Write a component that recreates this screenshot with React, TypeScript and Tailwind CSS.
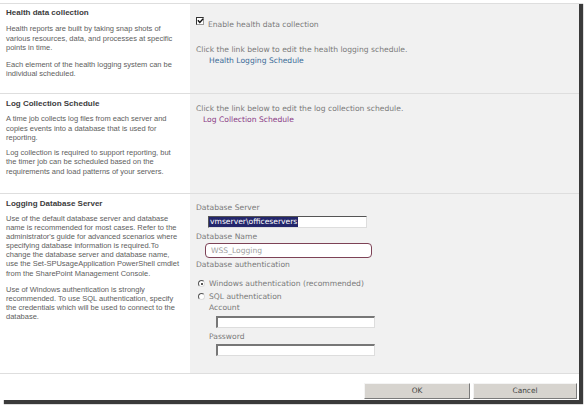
const LEFT_FONT = "font-['Liberation_Sans',Arial,sans-serif]";
const RIGHT_FONT = "font-['DejaVu_Sans',Verdana,sans-serif]";

function SectionHeading({ children }: { children: React.ReactNode }) {
  return <div className="text-[8px] font-bold leading-[10px] text-[#3c3c3c]">{children}</div>;
}

function Paragraph({ lines, tight }: { lines: string[]; tight?: boolean }) {
  return (
    <p className={`whitespace-nowrap text-[7.5px] text-[#606060] ${tight ? 'leading-[9.1px]' : 'leading-[9.6px]'}`}>
      {lines.map((line, i) => (
        <span key={i} className="block">
          {line}
        </span>
      ))}
    </p>
  );
}

function ClassicInput() {
  return (
    <div className="h-[12px] w-[159px] border-l-2 border-t-2 border-l-[#777] border-t-[#777] border-b border-r border-b-[#ddd] border-r-[#ddd] bg-white" />
  );
}

function Radio({ checked }: { checked?: boolean }) {
  return (
    <span className="relative inline-block h-[7px] w-[7px] shrink-0 rounded-full border border-l-[#555] border-t-[#555] border-r-[#ddd] border-b-[#ddd] bg-white">
      {checked && <span className="absolute left-[1.5px] top-[1.5px] h-[2.5px] w-[2.5px] rounded-full bg-[#222]" />}
    </span>
  );
}

export default function App() {
  return (
    <div className="h-[405px] w-[584px] overflow-hidden bg-white">
      <div className="flex h-[400px] w-[579px] flex-col bg-white pt-[3px] shadow-[4px_4px_1px_#3a3a3a]">
        {/* health */}
        <div className="flex h-[90px] border-t border-[#dedede]">
          <div className={`w-[190px] bg-white px-[6px] pt-[4px] ${LEFT_FONT}`}>
            <SectionHeading>Health data collection</SectionHeading>
            <div className="mt-[6px] space-y-[7px]">
              <Paragraph
                lines={[
                  'Health reports are built by taking snap shots of',
                  'various resources, data, and processes at specific',
                  'points in time.',
                ]}
              />
              <Paragraph
                lines={['Each element of the health logging system can be', 'individual scheduled.']}
              />
            </div>
          </div>
          <div className={`flex-1 bg-[#f1f1f1] pl-[6px] pt-[13px] text-[7.6px] text-[#7a7a7a] ${RIGHT_FONT}`}>
            <div className="flex items-start">
              <span className="relative inline-block h-[8px] w-[8px] border border-l-[#333] border-t-[#333] border-r-[#999] border-b-[#999] bg-white">
                <svg viewBox="0 0 8 8" className="absolute left-0 top-0 h-[7px] w-[7px]">
                  <path d="M1 2.5 L3.2 5 L7 0.8" fill="none" stroke="#111" strokeWidth="1.6" />
                </svg>
              </span>
              <span className="ml-[4px] mt-[3px] leading-[10px]">Enable health data collection</span>
            </div>
            <div className="mt-[15px] whitespace-nowrap leading-[10px]">
              Click the link below to edit the health logging schedule.
            </div>
            <div className="mt-[1px] pl-[13px] leading-[10px] text-[#3b6c98]">Health Logging Schedule</div>
          </div>
        </div>

        {/* log collection */}
        <div className="flex h-[100px] border-t border-[#dedede]">
          <div className={`w-[190px] bg-white px-[6px] pt-[5px] ${LEFT_FONT}`}>
            <SectionHeading>Log Collection Schedule</SectionHeading>
            <div className="mt-[5px] space-y-[5px]">
              <Paragraph
                lines={[
                  'A time job collects log files from each server and',
                  'copies events into a database that is used for',
                  'reporting.',
                ]}
              />
              <Paragraph
                lines={[
                  'Log collection is required to support reporting, but',
                  'the timer job can be scheduled based on the',
                  'requirements and load patterns of your servers.',
                ]}
              />
            </div>
          </div>
          <div className={`flex-1 bg-[#f1f1f1] pl-[6px] pt-[9px] text-[7.6px] text-[#7a7a7a] ${RIGHT_FONT}`}>
            <div className="whitespace-nowrap leading-[11px]">
              Click the link below to edit the log collection schedule.
            </div>
            <div className="pl-[7px] leading-[11px] text-[#8b3b86]">Log Collection Schedule</div>
          </div>
        </div>

        {/* database */}
        <div className="flex h-[181px] border-y border-[#dedede]">
          <div className={`w-[190px] bg-white px-[6px] pt-[5px] ${LEFT_FONT}`}>
            <SectionHeading>Logging Database Server</SectionHeading>
            <div className="mt-[5px] space-y-[7px]">
              <Paragraph
                tight
                lines={[
                  'Use of the default database server and database',
                  'name is recommended for most cases. Refer to the',
                  "administrator's guide for advanced scenarios where",
                  'specifying database information is required.To',
                  'change the database server and database name,',
                  'use the Set-SPUsageApplication PowerShell cmdlet',
                  'from the SharePoint Management Console.',
                ]}
              />
              <Paragraph
                tight
                lines={[
                  'Use of Windows authentication is strongly',
                  'recommended. To use SQL authentication, specify',
                  'the credentials which will be used to connect to the',
                  'database.',
                ]}
              />
            </div>
          </div>
          <div className={`flex-1 bg-[#f1f1f1] pl-[6px] pt-[9px] text-[7.6px] text-[#7a7a7a] ${RIGHT_FONT}`}>
            <div className="leading-[10px]">Database Server</div>
            <div className="ml-[12px] mt-[3px] flex h-[12px] w-[159px] items-center border-l border-t border-l-[#555] border-t-[#555] border-b border-r border-b-[#ddd] border-r-[#ddd] bg-white">
              <span className="bg-[#23266b] px-[1px] leading-[10px] text-white">vmserver\officeservers</span>
            </div>
            <div className="mt-[4px] leading-[10px]">Database Name</div>
            <div className="ml-[9px] mt-[1px] flex h-[15px] w-[167px] items-center rounded-[4px] border-[1.5px] border-[#7d4256] bg-white pl-[5px] text-[#a0a0a0]">
              WSS_Logging
            </div>
            <div className="mt-[2px] leading-[10px]">Database authentication</div>
            <div className="mt-[9px] flex items-center gap-[4px] pl-[2px] leading-[9px]">
              <Radio checked />
              <span>Windows authentication (recommended)</span>
            </div>
            <div className="mt-[4px] flex items-center gap-[4px] pl-[2px] leading-[9px]">
              <Radio />
              <span>SQL authentication</span>
            </div>
            <div className="pl-[13px]">
              <div className="mt-[2px] leading-[10px]">Account</div>
              <div className="ml-[7px] mt-[3px]">
                <ClassicInput />
              </div>
              <div className="mt-[4px] leading-[10px]">Password</div>
              <div className="ml-[7px] mt-[2px]">
                <ClassicInput />
              </div>
            </div>
          </div>
        </div>

        {/* buttons */}
        <div className={`flex justify-end gap-[3px] pr-[2px] pt-[9px] text-[7.4px] text-[#444] ${RIGHT_FONT}`}>
          <button className="h-[16px] w-[106px] border border-l-[#f4f4f4] border-t-[#f4f4f4] border-r-[#7a7a7a] border-b-[#7a7a7a] bg-[#d7d4cf]">
            OK
          </button>
          <button className="h-[16px] w-[104px] border border-l-[#f4f4f4] border-t-[#f4f4f4] border-r-[#7a7a7a] border-b-[#7a7a7a] bg-[#d7d4cf]">
            Cancel
          </button>
        </div>
      </div>
    </div>
  );
}
